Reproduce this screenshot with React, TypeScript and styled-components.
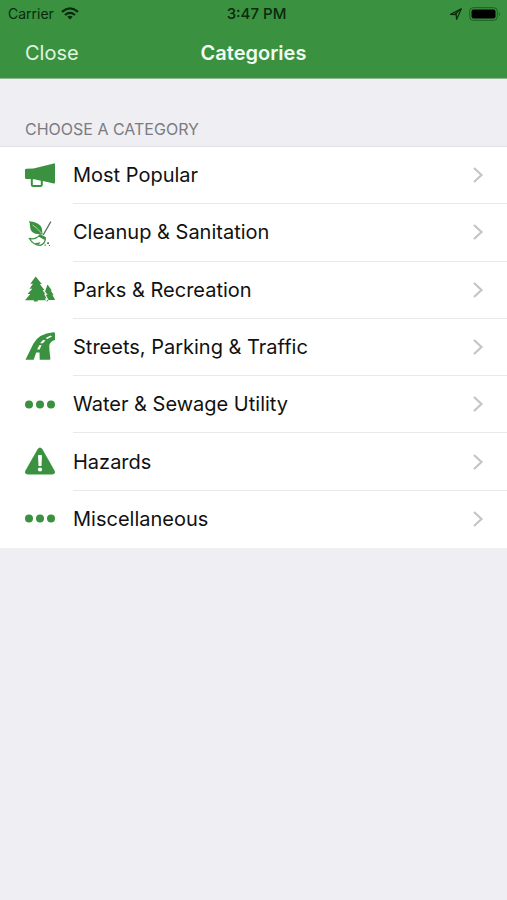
import React from "react";
import styled, { createGlobalStyle } from "styled-components";

const green = "#3a913f";

const GlobalStyle = createGlobalStyle`
  *, *::before, *::after { box-sizing: border-box; }
  body {
    margin: 0;
    background: #eeeef3;
    color: #111;
    font-family: Inter, "Liberation Sans", sans-serif;
  }
`;

const Header = styled.header`
  background: ${green};
  border-bottom: 1px solid #8fb692;
`;

const ThreeColumns = styled.div`
  display: grid;
  grid-template-columns: 1fr auto 1fr;
  align-items: center;
`;

const StatusBar = styled(ThreeColumns)`
  height: 27px;
  padding: 0 2px 0 8px;
  color: #0a2a0d;
  font-size: 14px;
  line-height: 20px;
`;

const StatusGroup = styled.div<{ $end?: boolean }>`
  display: flex;
  align-items: center;
  justify-content: ${(p) => (p.$end ? "flex-end" : "flex-start")};
  gap: 7px;
`;

const Clock = styled.time`
  font-size: 15px;
  font-weight: 500;
`;

const NavBar = styled(ThreeColumns)`
  height: 51px;
  padding: 0 25px;
  color: #f2fbf2;
`;

const CloseButton = styled.button`
  justify-self: start;
  padding: 0;
  border: 0;
  background: none;
  color: #e0f5e0;
  font: inherit;
  font-size: 20px;
  line-height: 28px;
  cursor: pointer;
`;

const Title = styled.h1`
  margin: 0;
  font-size: 20px;
  font-weight: 600;
  line-height: 28px;
`;

const SectionTitle = styled.h2`
  margin: 0;
  padding: 40px 25px 7px;
  border-bottom: 1px solid #e2e2e6;
  color: #7b7b81;
  font-size: 16px;
  font-weight: 400;
  line-height: 20px;
`;

const List = styled.ul`
  display: grid;
  grid-auto-rows: 1fr;
  min-height: 401px;
  margin: 0;
  padding: 0;
  background: #fff;
  list-style: none;
`;

const Item = styled.li`
  display: grid;
`;

const RowButton = styled.button`
  display: flex;
  align-items: stretch;
  gap: 18px;
  padding: 0 0 0 25px;
  border: 0;
  background: none;
  color: inherit;
  font: inherit;
  font-size: 20px;
  line-height: 28px;
  text-align: left;
  cursor: pointer;
`;

const RowIcon = styled.svg`
  flex: none;
  align-self: center;
  width: 30px;
  height: 30px;
  color: ${green};
`;

const RowBody = styled.span`
  display: flex;
  flex: 1;
  align-items: center;
  justify-content: space-between;
  padding-right: 23px;
  border-bottom: 1px solid #e9e9eb;

  ${Item}:last-child & {
    border-bottom-color: transparent;
  }
`;

const ChevronIcon = styled.svg`
  width: 12px;
  height: 18px;
`;

const Megaphone = () => (
  <>
    <path d="M1.2 7.7 8.5 7.5 28.8 2.4Q30 2.1 30 3.5V21.3Q30 22.8 28.7 22.5L17.8 20V23.7Q17.8 26 15.5 26H8Q5.8 26 5.8 23.7V18H1.2Q0 18 0 16.8V9Q0 7.7 1.2 7.7Z" fill="currentColor" />
    <path d="M7.8 18.2V24H15.8V19.7L9.4 18.2Z" fill="#fff" />
  </>
);

const Broom = () => (
  <>
    <path d="M4 3C9 4 14.5 5.2 16.4 9.2 17.3 11.4 17 13.7 17.8 16.5 13 16.5 8 16.2 5.9 12.3 4.6 9.6 5.6 6.4 4 3Z" fill="currentColor" />
    <path d="M7.5 7Q11.7 9.2 16.8 15.5" fill="none" stroke="#fff" strokeWidth=".6" />
    <path d="m25.6 4-7.1 12.5" fill="none" stroke="#55745a" strokeWidth="1.4" strokeLinecap="round" />
    <path d="M4.2 20.5Q10.5 22 14.8 16.8L20.3 19.6Q20.8 25 15.5 27.3 9 27.7 4.2 20.5Z" fill="#fff" stroke="currentColor" strokeWidth="1.3" strokeLinejoin="round" />
    <path d="m14.8 16.8 5.5 2.8-.6 2.4-6.3-3.4ZM9.5 25q4.5 0 5.9-1l-1.4 2.7q-2.1-.2-4.5-1.7Z" fill="currentColor" />
    <path d="M22.2 24.3h1.8v1.8h-1.8zM19.6 26.6h1.2v1.2h-1.2zM23.9 27h1.1v1.1h-1.1z" fill="#55745a" />
  </>
);

const Trees = () => (
  <>
    <path d="m22.5 9.5 4.4 6h-1.3l3 4.2h-1.2l2.8 5.4h-7.1v1.1h-2v-1.1h-4z" fill="currentColor" />
    <path d="M10.7 1.5 16.8 9h-2l4.8 6.2h-1.8l4.1 4.2-1.3.1 1.1 5.7h-9.1v1.2H8.9v-1.2H0l5.2-6.1H2.4l5-5.3H4.5L8 8.8H5.3z" fill="currentColor" />
    <path d="m18.4 15.3 3.1 3.9h-1.6l2.6 4.9h-1.7l1.2 1.5" fill="none" stroke="#fff" strokeWidth="1.1" />
  </>
);

const Road = () => (
  <>
    <path d="M.5 27.7 8.2 12.1Q13.5 1.5 28.5.3 30 .2 30 1.7V8.1Q25.2 9.5 24.3 13.3 24.2 18.5 25.4 26.4 25.6 27.7 24.2 27.7H14.7L14.5 20.5H11.2L8.7 27.7Z" fill="currentColor" />
    <path d="m12.1 17.6 2.1-4.4 2.4-.1-1.9 4.5ZM15 11.3 18 7.9l2.5.4-2.6 3ZM20.6 6.1 25.8 3.5l1.2 1.1-4.8 2.3Z" fill="#fff" />
  </>
);

const Dots = () => (
  <g fill="currentColor">
    <circle cx="4" cy="14.5" r="4" />
    <circle cx="15" cy="14.5" r="4" />
    <circle cx="26" cy="14.5" r="4" />
  </g>
);

const Warning = () => (
  <>
    <path d="M12.7 2.1Q15-1.3 17.3 2.1L29.5 23.4Q31 27.4 27.3 27.4H2.7Q-1 27.4.5 23.4Z" fill="currentColor" />
    <path d="M13 8.3q2-.8 4 0L16.5 19h-3Z" fill="#fff" />
    <circle cx="15" cy="22.5" r="2.1" fill="#fff" />
  </>
);

const categories: { name: string; Icon: React.FC }[] = [
  { name: "Most Popular", Icon: Megaphone },
  { name: "Cleanup & Sanitation", Icon: Broom },
  { name: "Parks & Recreation", Icon: Trees },
  { name: "Streets, Parking & Traffic", Icon: Road },
  { name: "Water & Sewage Utility", Icon: Dots },
  { name: "Hazards", Icon: Warning },
  { name: "Miscellaneous", Icon: Dots },
];

export default function App() {
  return (
    <>
      <GlobalStyle />
      <Header>
        <StatusBar>
          <StatusGroup>
            Carrier
            <svg width="18" height="13" viewBox="0 0 18 13" fill="none" stroke="currentColor" strokeWidth="2.3" aria-label="Wi-Fi">
              <path d="M1 4.8q8-6.8 16 0M4 8q5-4.3 10 0" />
              <path d="M6.3 9.8q2.7-2.2 5.4 0L9 12.6Z" fill="currentColor" stroke="none" />
            </svg>
          </StatusGroup>
          <Clock>3:47 PM</Clock>
          <StatusGroup $end>
            <svg width="12" height="12" viewBox="0 0 12 12" aria-label="Location">
              <path d="M.6 6.4 11.3.8 6.6 11.4 6.2 6.6Z" fill="none" stroke="currentColor" strokeWidth="1.2" strokeLinejoin="round" />
              <path d="M11.3.8 6.2 6.6 3.4 6.4Z" fill="currentColor" />
            </svg>
            <svg width="36" height="14" viewBox="0 0 36 14" aria-label="Battery full">
              <rect x=".7" y=".7" width="27.6" height="12.6" rx="3.5" fill="none" stroke="#1c5f22" />
              <rect x="2.5" y="2.5" width="24" height="9" rx="2" fill="#000" />
              <path d="M30 5q2 2 0 4Z" fill="#1c5f22" />
            </svg>
          </StatusGroup>
        </StatusBar>
        <NavBar>
          <CloseButton type="button">Close</CloseButton>
          <Title>Categories</Title>
        </NavBar>
      </Header>
      <main>
        <SectionTitle>CHOOSE A CATEGORY</SectionTitle>
        <List>
          {categories.map(({ name, Icon }) => (
            <Item key={name}>
              <RowButton type="button">
                <RowIcon viewBox="0 0 30 30" aria-hidden="true">
                  <Icon />
                </RowIcon>
                <RowBody>
                  {name}
                  <ChevronIcon viewBox="0 0 12 18" aria-hidden="true">
                    <path d="m2 2 7.5 7L2 16" fill="none" stroke="#c5c5c9" strokeWidth="2.2" />
                  </ChevronIcon>
                </RowBody>
              </RowButton>
            </Item>
          ))}
        </List>
      </main>
    </>
  );
}
